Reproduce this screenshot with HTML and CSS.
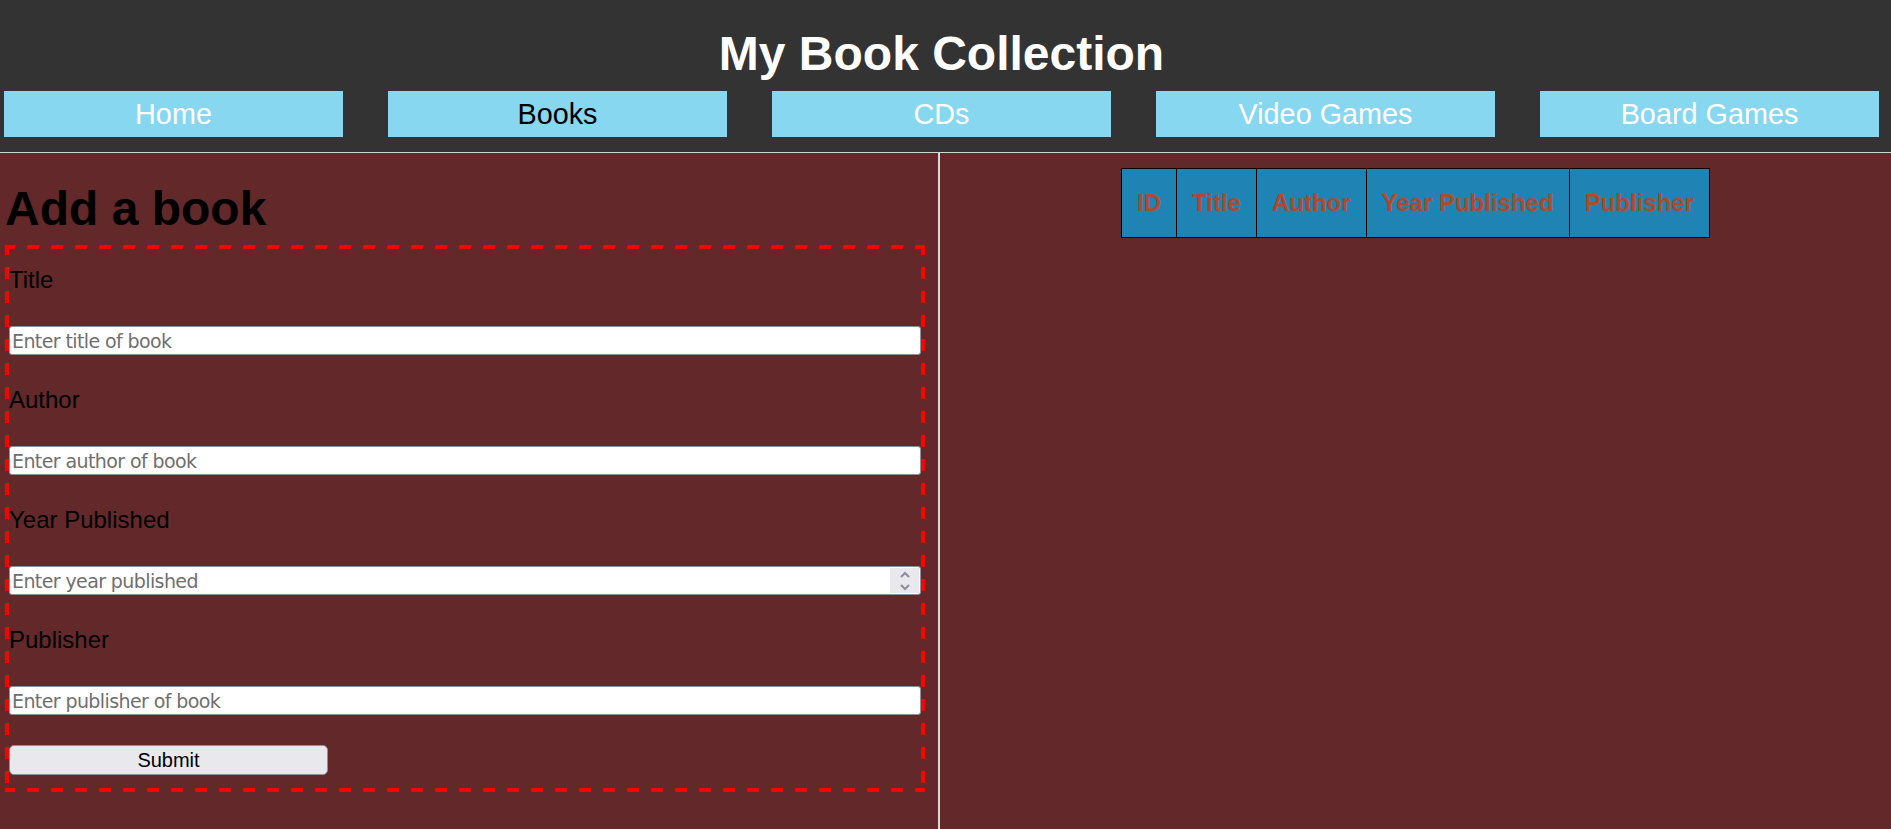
FILE: index.html
```html
<!DOCTYPE html>
<html lang="en">
<head>
<meta charset="utf-8">
<title>My Book Collection</title>
<link rel="stylesheet" href="styles.css">
</head>
<body>
<header class="site-header">
  <h1 class="site-title">My Book Collection</h1>
  <nav class="nav">
    <a class="nav-item" href="#">Home</a>
    <a class="nav-item active" href="#">Books</a>
    <a class="nav-item" href="#">CDs</a>
    <a class="nav-item" href="#">Video Games</a>
    <a class="nav-item" href="#">Board Games</a>
  </nav>
</header>
<main class="main">
  <section class="left">
    <h1 class="form-title">Add a book</h1>
    <form class="book-form">
      <label class="field-label" for="title">Title</label>
      <input class="field-input" id="title" type="text" placeholder="Enter title of book">
      <label class="field-label gap" for="author">Author</label>
      <input class="field-input" id="author" type="text" placeholder="Enter author of book">
      <label class="field-label gap" for="year">Year Published</label>
      <div class="num-wrap">
        <input class="field-input num" id="year" type="number" placeholder="Enter year published">
        <span class="spin">
          <svg width="12" height="22" viewBox="0 0 12 22"><path d="M2 7 L6 3 L10 7 M2 15 L6 19 L10 15" fill="none" stroke="#8f8f9d" stroke-width="2.2"/></svg>
        </span>
      </div>
      <label class="field-label gap" for="publisher">Publisher</label>
      <input class="field-input" id="publisher" type="text" placeholder="Enter publisher of book">
      <button class="submit" type="button">Submit</button>
    </form>
  </section>
  <section class="right">
    <table class="books">
      <thead>
        <tr>
          <th>ID</th>
          <th>Title</th>
          <th>Author</th>
          <th>Year Published</th>
          <th>Publisher</th>
        </tr>
      </thead>
    </table>
  </section>
</main>
</body>
</html>
```
FILE: styles.css
```css
html {
  background: #632829;
}
body {
  margin: 0;
  font-family: "Liberation Sans", Arial, sans-serif;
}
.site-header {
  background: #333333;
  padding: 26px 12px 15px 4px;
  border-bottom: 1px solid #d4d4d4;
}
.site-title {
  margin: 0;
  color: #ffffff;
  font-size: 48px;
  line-height: 55px;
  font-weight: bold;
  text-align: center;
}
.nav {
  display: flex;
  gap: 45px;
  margin-top: 10px;
}
.nav-item {
  flex: 1;
  display: block;
  height: 46px;
  line-height: 46px;
  background: #87d7f0;
  color: #ffffff;
  text-decoration: none;
  text-align: center;
  font-size: 28.8px;
}
.nav-item.active {
  color: #000000;
}
.main {
  display: flex;
  min-height: calc(100vh - 153px);
  background: #632829;
}
.left {
  width: 940px;
  box-sizing: border-box;
  padding-left: 5px;
  border-right: 2px solid #d9d9d9;
  flex-shrink: 0;
}
.form-title {
  margin: 28px 0 9px;
  font-size: 48px;
  line-height: 55px;
  font-weight: bold;
  color: #000000;
}
.book-form {
  width: 920px;
  box-sizing: border-box;
  padding: 21px 4px 17px;
  display: flex;
  flex-direction: column;
  margin-bottom: 30px;
  background:
    linear-gradient(to right, #ff0000 50%, transparent 50%) -2px 0 / 24px 4px repeat-x,
    linear-gradient(to right, #ff0000 50%, transparent 50%) -2px 100% / 24px 4px repeat-x,
    linear-gradient(to bottom, #ff0000 50%, transparent 50%) 0 -2px / 4px 24px repeat-y,
    linear-gradient(to bottom, #ff0000 50%, transparent 50%) 100% -2px / 4px 24px repeat-y;
}
.field-label {
  display: block;
  font-size: 24px;
  line-height: 28px;
  color: #000000;
}
.field-label.gap {
  margin-top: 31px;
}
.field-input {
  margin: 32px 0 0;
  height: 29px;
  box-sizing: border-box;
  border: 1px solid #8f8f9d;
  border-radius: 3px;
  background: #ffffff;
  padding: 0 2px;
  font-family: "DejaVu Sans", Verdana, sans-serif;
  font-size: 19px;
  letter-spacing: -0.6px;
  color: #000000;
  outline: none;
}
.field-input::placeholder {
  color: #6f6f6f;
}
.num-wrap {
  position: relative;
  display: flex;
  flex-direction: column;
}
.num {
  -moz-appearance: textfield;
}
.num::-webkit-inner-spin-button,
.num::-webkit-outer-spin-button {
  -webkit-appearance: none;
  margin: 0;
}
.spin {
  position: absolute;
  right: 2px;
  bottom: 2px;
  width: 29px;
  height: 25px;
  background: #e9e9ed;
  display: flex;
  align-items: center;
  justify-content: center;
}
.submit {
  align-self: flex-start;
  margin: 30px 0 0;
  width: 319px;
  height: 30px;
  box-sizing: border-box;
  background: #e9e9ed;
  border: 1px solid #8f8f9d;
  border-radius: 5px;
  font-family: "Liberation Sans", Arial, sans-serif;
  font-size: 20px;
  color: #000000;
  padding: 0;
}
.right {
  flex: 1;
}
.books {
  margin: 15px auto 0;
  border-collapse: collapse;
}
.books th {
  background: #1f84b3;
  border: 1px solid #000000;
  padding: 20px 15px;
  font-size: 24px;
  line-height: 28px;
  font-weight: bold;
  color: #b5482b;
}
```
